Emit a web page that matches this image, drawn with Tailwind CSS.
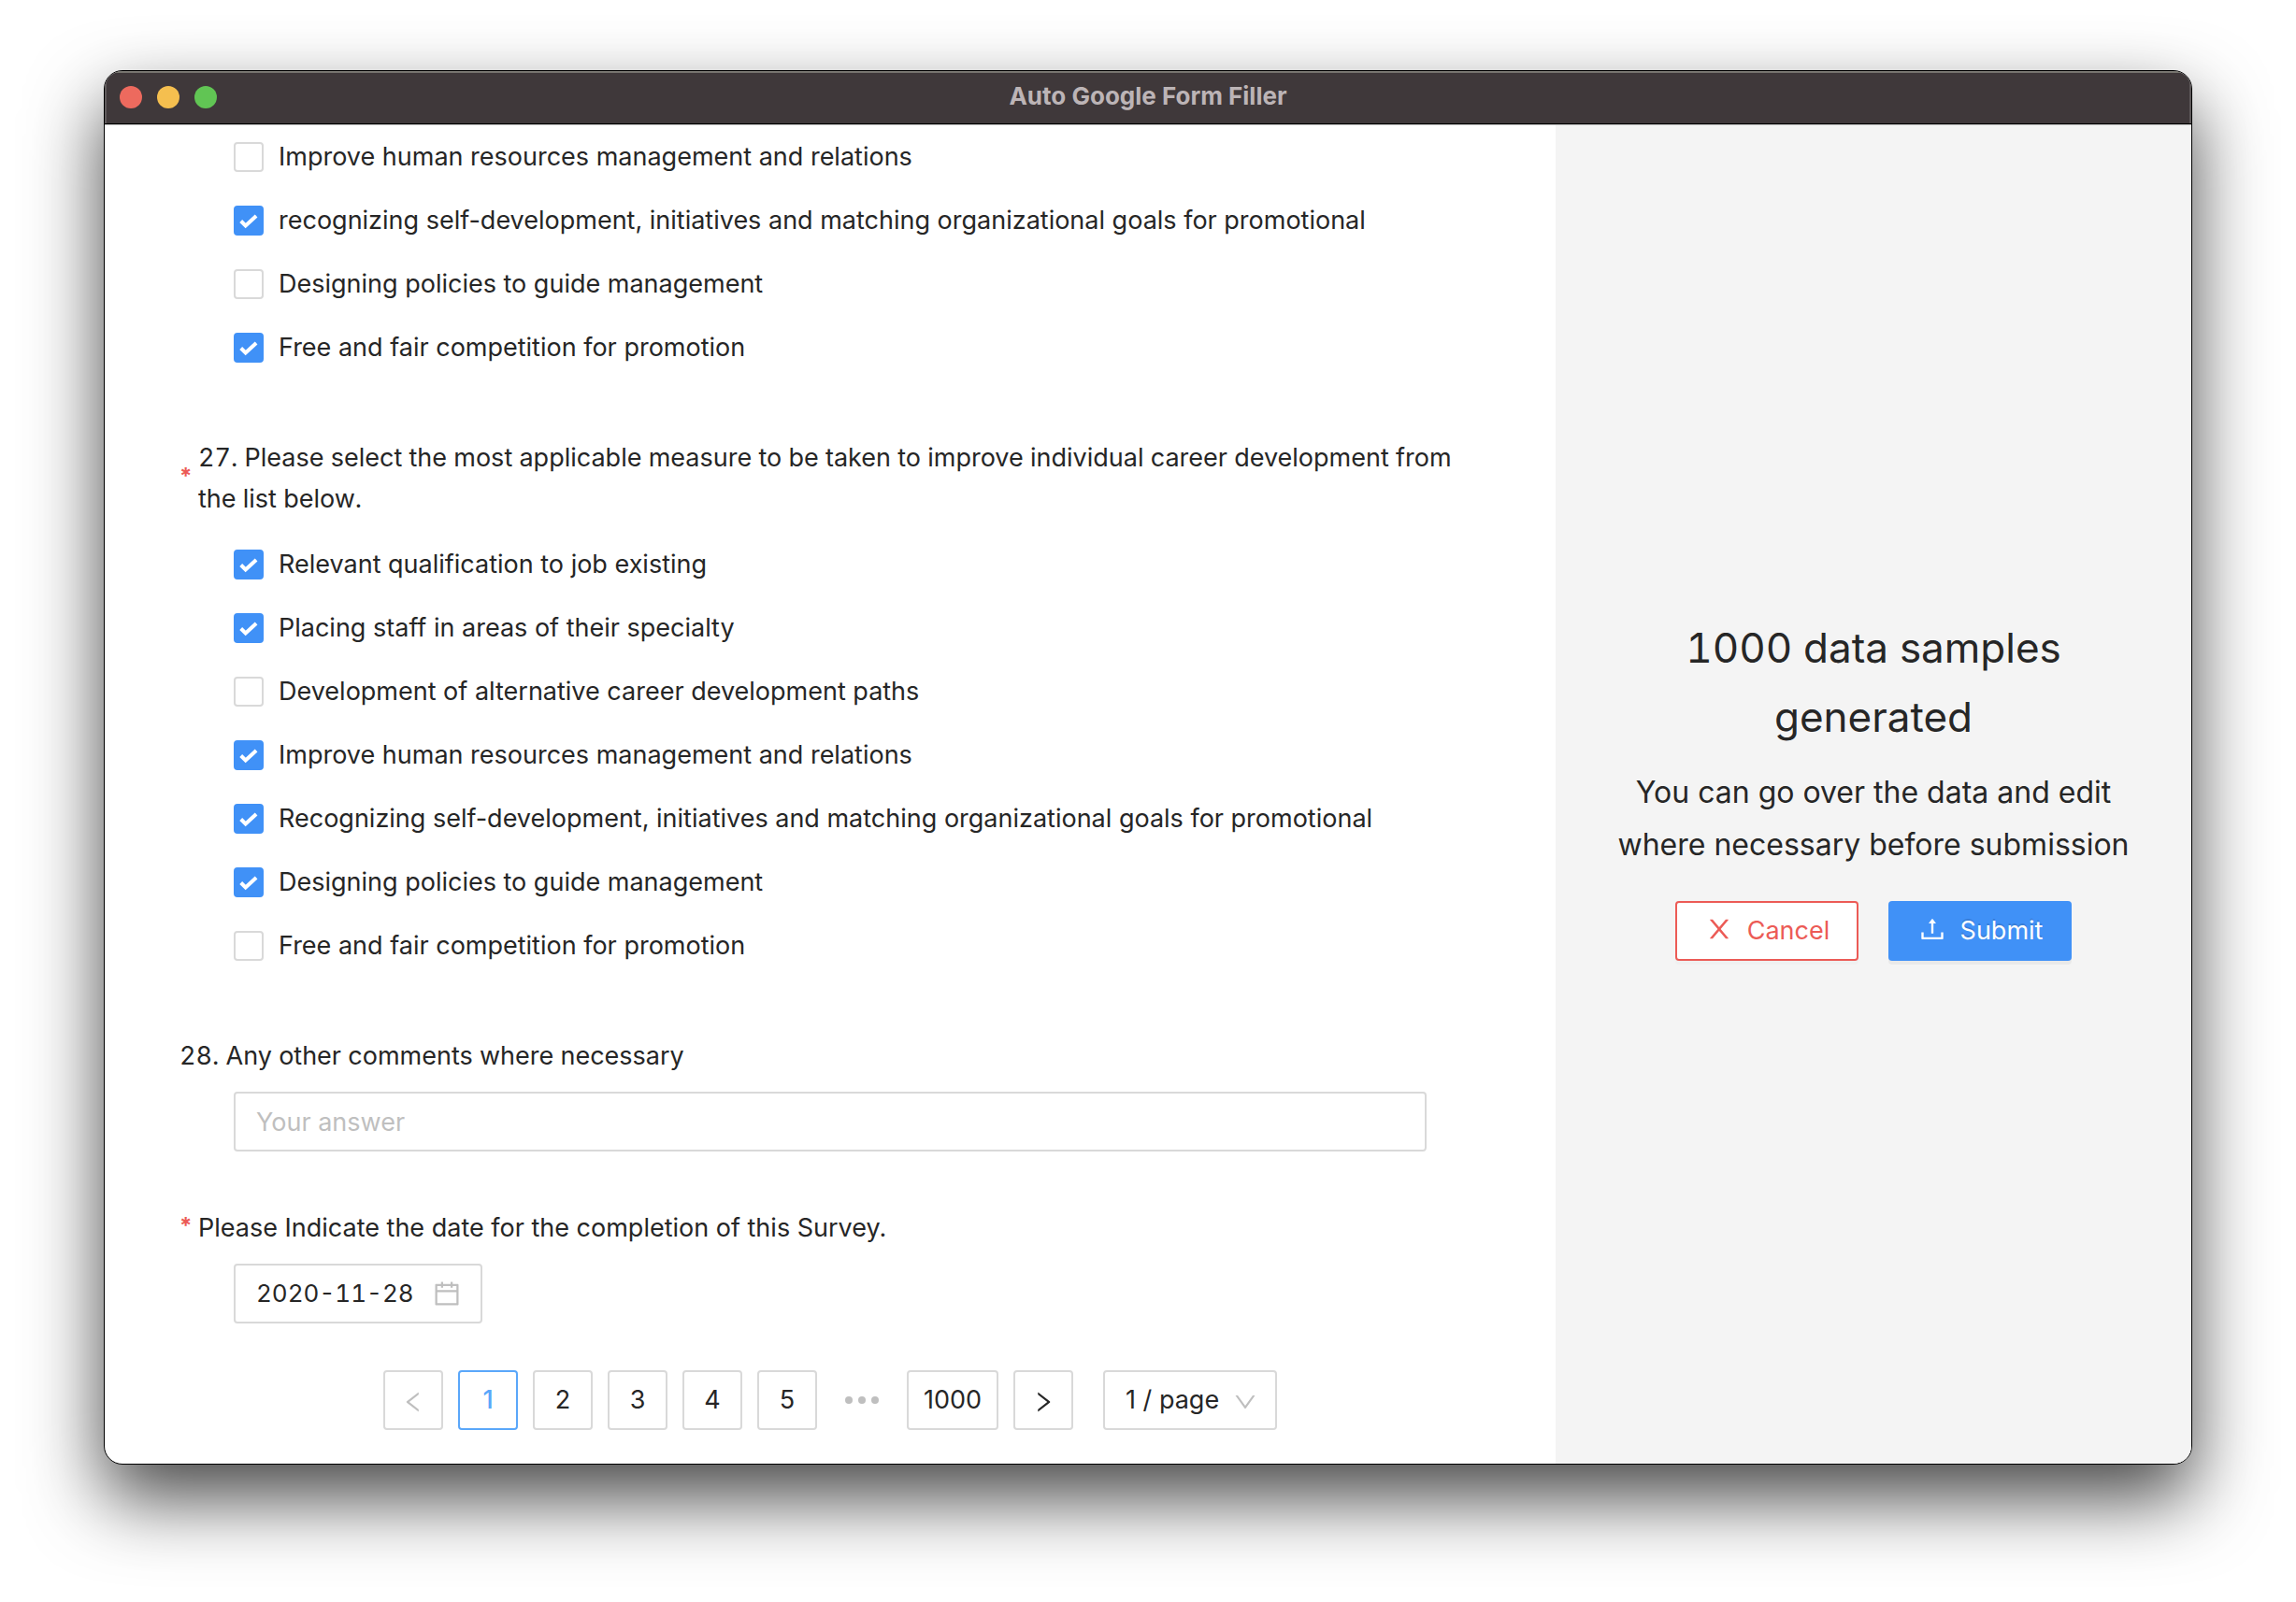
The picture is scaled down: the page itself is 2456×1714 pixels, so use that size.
<!DOCTYPE html>
<html lang="en">
<head>
<meta charset="utf-8">
<title>Auto Google Form Filler</title>
<script src="https://cdn.jsdelivr.net/npm/@tailwindcss/browser@4"></script>
</head>
<body class="min-h-screen bg-white px-[111px] pt-[75px] pb-[147px] font-[Inter,sans-serif] text-[27px] leading-[44px] text-[#262626]">

<!-- icon and check mark shapes -->
<svg class="hidden" aria-hidden="true">
  <symbol id="check" viewBox="0 0 32 32"><path d="M7.7 16.5l5 5 11.4-10.4" fill="none" stroke="#fff" stroke-width="4"/></symbol>
  <symbol id="upload" viewBox="0 0 1024 1024"><path d="M400 317.7h73.9V656c0 4.4 3.6 8 8 8h60c4.4 0 8-3.6 8-8V317.7H624c6.7 0 10.4-7.7 6.3-12.9L518.3 163a8 8 0 0 0-12.6 0l-112 141.7c-4.1 5.3-.4 13 6.3 13zM878 626h-60c-4.4 0-8 3.6-8 8v154H214V634c0-4.4-3.6-8-8-8h-60c-4.4 0-8 3.6-8 8v198c0 17.7 14.3 32 32 32h684c17.7 0 32-14.3 32-32V634c0-4.4-3.6-8-8-8z"/></symbol>
  <symbol id="close" viewBox="0 0 1024 1024"><path d="M563.8 512l262.5-312.9c4.4-5.2.7-13.1-6.1-13.1h-79.8c-4.7 0-9.2 2.1-12.3 5.7L511.6 449.8 295.1 191.7c-3-3.6-7.5-5.7-12.3-5.7H203c-6.8 0-10.5 7.9-6.1 13.1L459.4 512 196.9 824.9A7.95 7.95 0 0 0 203 838h79.8c4.7 0 9.2-2.1 12.3-5.7l216.5-258.1 216.5 258.1c3 3.6 7.5 5.7 12.3 5.7h79.8c6.8 0 10.5-7.9 6.1-13.1L563.8 512z"/></symbol>
  <symbol id="calendar" viewBox="0 0 1024 1024"><path d="M880 184H712v-64c0-4.4-3.6-8-8-8h-56c-4.4 0-8 3.6-8 8v64H384v-64c0-4.4-3.6-8-8-8h-56c-4.4 0-8 3.6-8 8v64H144c-17.7 0-32 14.3-32 32v664c0 17.7 14.3 32 32 32h736c17.7 0 32-14.3 32-32V216c0-17.7-14.3-32-32-32zm-40 656H184V460h656v380zM184 392V256h128v48c0 4.4 3.6 8 8 8h56c4.4 0 8-3.6 8-8v-48h256v48c0 4.4 3.6 8 8 8h56c4.4 0 8-3.6 8-8v-48h128v136H184z"/></symbol>
  <symbol id="left" viewBox="0 0 1024 1024"><path d="M724 218.3V141c0-6.7-7.7-10.4-12.9-6.3L260.3 486.8a31.86 31.86 0 0 0 0 50.3l450.8 352.1c5.3 4.1 12.9.4 12.9-6.3v-77.3c0-4.9-2.3-9.6-6.1-12.6l-360-281 360-281.1c3.8-3 6.1-7.7 6.1-12.6z"/></symbol>
  <symbol id="right" viewBox="0 0 1024 1024"><path d="M765.7 486.8L314.9 134.7A7.97 7.97 0 0 0 302 141v77.3c0 4.9 2.3 9.6 6.1 12.6l360 281.1-360 281.1c-3.9 3-6.1 7.7-6.1 12.6V883c0 6.7 7.7 10.4 12.9 6.3l450.8-352.1a31.96 31.96 0 0 0 0-50.4z"/></symbol>
  <symbol id="down" viewBox="0 0 1024 1024"><path d="M884 256h-75c-5.1 0-9.9 2.5-12.9 6.6L512 654.2 227.9 262.6c-3-4.1-7.8-6.6-12.9-6.6h-75c-6.5 0-10.3 7.4-6.5 12.7l352.6 486.1c12.8 17.6 39 17.6 51.7 0l352.6-486.1c3.9-5.3.1-12.7-6.4-12.7z"/></symbol>
</svg>

<div class="flex flex-col overflow-hidden rounded-[20px] border border-black bg-white shadow-[0_36px_80px_rgba(0,0,0,0.72)]">
  <header class="grid h-[57px] grid-cols-[1fr_auto_1fr] items-center border-b border-black bg-[#3f383a] px-4 shadow-[inset_0_2px_0_#77756f,inset_2px_0_0_#5f5a5b,inset_-2px_0_0_#5f5a5b]">
    <div class="flex gap-4">
      <button type="button" aria-label="Close" class="size-6 rounded-full bg-[#ed6a5e]"></button>
      <button type="button" aria-label="Minimize" class="size-6 rounded-full bg-[#f5bf4f]"></button>
      <button type="button" aria-label="Zoom" class="size-6 rounded-full bg-[#61c554]"></button>
    </div>
    <h1 class="pb-0.5 text-[26px] leading-[32px] font-bold text-[#bcb4b6]">Auto Google Form Filler</h1>
  </header>

  <main class="flex border-t border-[#bfbfbf]">
    <form class="flex-1 px-20 pb-9">
      <fieldset class="px-[58px]">
        <label class="flex h-[68px] items-center gap-4"><span class="grid size-8"><input type="checkbox" class="peer col-start-1 row-start-1 size-8 appearance-none rounded-[4px] border-2 border-[#d9d9d9] bg-white checked:border-[#4091f7] checked:bg-[#4091f7]"><svg class="pointer-events-none invisible col-start-1 row-start-1 size-8 peer-checked:visible"><use href="#check"/></svg></span>Improve human resources management and relations</label>
        <label class="flex h-[68px] items-center gap-4"><span class="grid size-8"><input type="checkbox" checked class="peer col-start-1 row-start-1 size-8 appearance-none rounded-[4px] border-2 border-[#d9d9d9] bg-white checked:border-[#4091f7] checked:bg-[#4091f7]"><svg class="pointer-events-none invisible col-start-1 row-start-1 size-8 peer-checked:visible"><use href="#check"/></svg></span>recognizing self-development, initiatives and matching organizational goals for promotional</label>
        <label class="flex h-[68px] items-center gap-4"><span class="grid size-8"><input type="checkbox" class="peer col-start-1 row-start-1 size-8 appearance-none rounded-[4px] border-2 border-[#d9d9d9] bg-white checked:border-[#4091f7] checked:bg-[#4091f7]"><svg class="pointer-events-none invisible col-start-1 row-start-1 size-8 peer-checked:visible"><use href="#check"/></svg></span>Designing policies to guide management</label>
        <label class="flex h-[68px] items-center gap-4"><span class="grid size-8"><input type="checkbox" checked class="peer col-start-1 row-start-1 size-8 appearance-none rounded-[4px] border-2 border-[#d9d9d9] bg-white checked:border-[#4091f7] checked:bg-[#4091f7]"><svg class="pointer-events-none invisible col-start-1 row-start-1 size-8 peer-checked:visible"><use href="#check"/></svg></span>Free and fair competition for promotion</label>
      </fieldset>

      <fieldset class="mt-[62px]">
        <legend class="flex items-center gap-2 pb-[14px]"><span class="w-3 shrink-0 pb-1 text-[24px] leading-[40px] font-bold text-[#ec5b56]">*</span><span class="tabular-nums">27. Please select the most applicable measure to be taken to improve individual career development from the list below.</span></legend>
        <div class="px-[58px]">
          <label class="flex h-[68px] items-center gap-4"><span class="grid size-8"><input type="checkbox" checked class="peer col-start-1 row-start-1 size-8 appearance-none rounded-[4px] border-2 border-[#d9d9d9] bg-white checked:border-[#4091f7] checked:bg-[#4091f7]"><svg class="pointer-events-none invisible col-start-1 row-start-1 size-8 peer-checked:visible"><use href="#check"/></svg></span>Relevant qualification to job existing</label>
          <label class="flex h-[68px] items-center gap-4"><span class="grid size-8"><input type="checkbox" checked class="peer col-start-1 row-start-1 size-8 appearance-none rounded-[4px] border-2 border-[#d9d9d9] bg-white checked:border-[#4091f7] checked:bg-[#4091f7]"><svg class="pointer-events-none invisible col-start-1 row-start-1 size-8 peer-checked:visible"><use href="#check"/></svg></span>Placing staff in areas of their specialty</label>
          <label class="flex h-[68px] items-center gap-4"><span class="grid size-8"><input type="checkbox" class="peer col-start-1 row-start-1 size-8 appearance-none rounded-[4px] border-2 border-[#d9d9d9] bg-white checked:border-[#4091f7] checked:bg-[#4091f7]"><svg class="pointer-events-none invisible col-start-1 row-start-1 size-8 peer-checked:visible"><use href="#check"/></svg></span>Development of alternative career development paths</label>
          <label class="flex h-[68px] items-center gap-4"><span class="grid size-8"><input type="checkbox" checked class="peer col-start-1 row-start-1 size-8 appearance-none rounded-[4px] border-2 border-[#d9d9d9] bg-white checked:border-[#4091f7] checked:bg-[#4091f7]"><svg class="pointer-events-none invisible col-start-1 row-start-1 size-8 peer-checked:visible"><use href="#check"/></svg></span>Improve human resources management and relations</label>
          <label class="flex h-[68px] items-center gap-4"><span class="grid size-8"><input type="checkbox" checked class="peer col-start-1 row-start-1 size-8 appearance-none rounded-[4px] border-2 border-[#d9d9d9] bg-white checked:border-[#4091f7] checked:bg-[#4091f7]"><svg class="pointer-events-none invisible col-start-1 row-start-1 size-8 peer-checked:visible"><use href="#check"/></svg></span>Recognizing self-development, initiatives and matching organizational goals for promotional</label>
          <label class="flex h-[68px] items-center gap-4"><span class="grid size-8"><input type="checkbox" checked class="peer col-start-1 row-start-1 size-8 appearance-none rounded-[4px] border-2 border-[#d9d9d9] bg-white checked:border-[#4091f7] checked:bg-[#4091f7]"><svg class="pointer-events-none invisible col-start-1 row-start-1 size-8 peer-checked:visible"><use href="#check"/></svg></span>Designing policies to guide management</label>
          <label class="flex h-[68px] items-center gap-4"><span class="grid size-8"><input type="checkbox" class="peer col-start-1 row-start-1 size-8 appearance-none rounded-[4px] border-2 border-[#d9d9d9] bg-white checked:border-[#4091f7] checked:bg-[#4091f7]"><svg class="pointer-events-none invisible col-start-1 row-start-1 size-8 peer-checked:visible"><use href="#check"/></svg></span>Free and fair competition for promotion</label>
        </div>
      </fieldset>

      <div class="mt-[62px] flex flex-col gap-4">
        <label for="comments" class="tabular-nums">28. Any other comments where necessary</label>
        <div class="flex px-[58px]">
          <input id="comments" type="text" placeholder="Your answer" class="h-16 w-full rounded-[4px] border-2 border-[#d9d9d9] px-[22px] placeholder:text-[#bfbfbf]">
        </div>
      </div>

      <div class="mt-[60px] flex flex-col gap-4">
        <label for="date" class="flex gap-2"><span class="w-3 shrink-0 pb-1 text-[24px] leading-[40px] font-bold text-[#ec5b56]">*</span>Please Indicate the date for the completion of this Survey.</label>
        <div class="flex px-[58px]">
          <div class="flex h-16 w-[266px] items-center justify-between rounded-[4px] border-2 border-[#d9d9d9] px-[20px]">
            <input id="date" type="text" value="2020-11-28" class="w-[176px] min-w-0 pl-[2px] text-[26px] tabular-nums">
            <svg class="size-8 shrink-0 fill-[#bfbfbf]"><use href="#calendar"/></svg>
          </div>
        </div>
      </div>

      <nav aria-label="Pages" class="mt-[50px] flex justify-center gap-4">
        <button type="button" disabled aria-label="Previous page" class="flex size-16 items-center justify-center rounded-[4px] border-2 border-[#d9d9d9] pt-1"><svg class="size-7 fill-[#bfbfbf]"><use href="#left"/></svg></button>
        <button type="button" aria-current="page" class="size-16 rounded-[4px] border-2 border-[#5aa7fa] font-medium text-[#5aa7fa]">1</button>
        <button type="button" class="size-16 rounded-[4px] border-2 border-[#d9d9d9]">2</button>
        <button type="button" class="size-16 rounded-[4px] border-2 border-[#d9d9d9]">3</button>
        <button type="button" class="size-16 rounded-[4px] border-2 border-[#d9d9d9]">4</button>
        <button type="button" class="size-16 rounded-[4px] border-2 border-[#d9d9d9]">5</button>
        <button type="button" aria-label="Next 5 pages" class="flex size-16 items-center justify-center gap-[6px]"><span class="size-2 rounded-full bg-[#bfbfbf]"></span><span class="size-2 rounded-full bg-[#bfbfbf]"></span><span class="size-2 rounded-full bg-[#bfbfbf]"></span></button>
        <button type="button" class="h-16 w-[98px] rounded-[4px] border-2 border-[#d9d9d9]">1000</button>
        <button type="button" aria-label="Next page" class="flex size-16 items-center justify-center rounded-[4px] border-2 border-[#d9d9d9] pt-1"><svg class="size-7 fill-[#262626]"><use href="#right"/></svg></button>
        <div class="ml-4 grid w-[186px] items-center">
          <select aria-label="Samples per page" class="col-start-1 row-start-1 h-16 w-full appearance-none rounded-[4px] border-2 border-[#d9d9d9] pl-[22px]"><option>1 / page</option></select>
          <svg class="pointer-events-none col-start-1 row-start-1 mt-1 mr-5 size-7 justify-self-end fill-[#bfbfbf]"><use href="#down"/></svg>
        </div>
      </nav>
    </form>

    <aside class="flex w-[680px] shrink-0 flex-col items-center justify-center bg-[#f4f4f4] px-10 pb-4 text-center">
      <h2 class="text-[44px] leading-[74px] tabular-nums">1000 data samples<br>generated</h2>
      <p class="mt-4 text-[32px] leading-[56px]">You can go over the data and edit<br>where necessary before submission</p>
      <div class="mt-8 flex gap-8">
        <button type="button" class="flex h-16 w-[196px] items-center justify-center gap-[14px] rounded-[4px] border-2 border-[#ec5b56] bg-white text-[#ec5b56] shadow-[0_4px_0_rgba(0,0,0,0.016)]"><svg class="mb-1 size-8 fill-current"><use href="#close"/></svg>Cancel</button>
        <button type="button" class="flex h-16 w-[196px] items-center justify-center gap-[14px] rounded-[4px] bg-[#4091f7] text-white shadow-[0_4px_0_rgba(0,0,0,0.045)] text-shadow-[0_-2px_0_rgba(0,0,0,0.12)]"><svg class="mb-1 size-8 fill-current"><use href="#upload"/></svg>Submit</button>
      </div>
    </aside>
  </main>
</div>
</body>
</html>
